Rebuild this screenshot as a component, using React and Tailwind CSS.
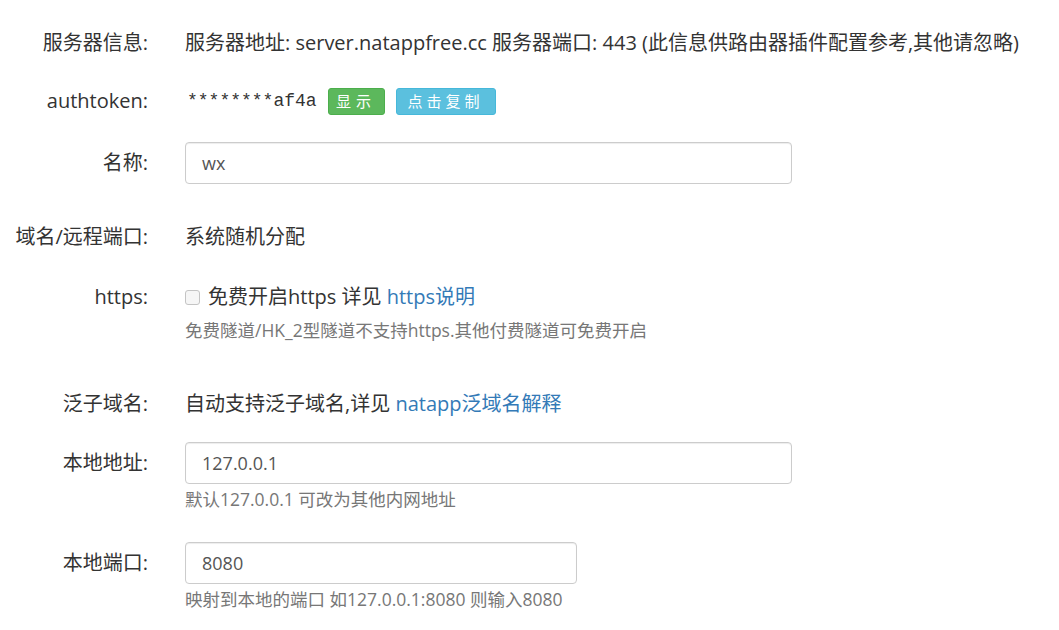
const font = { fontFamily: '"Open Sans", "Noto Sans CJK SC", sans-serif' };

function Row({ label, className = "", children }) {
  return (
    <div className={`flex items-start ${className}`}>
      <div className="w-[148px] shrink-0 text-right text-[20px] leading-[42px] text-[#333]">{label}</div>
      <div className="ml-[37px] flex flex-col">{children}</div>
    </div>
  );
}

function Help({ children, className = "" }) {
  return <div className={`text-[17.5px] leading-[22px] text-[#777] ${className}`}>{children}</div>;
}

function Field({ value, width }) {
  return (
    <div
      className={`${width} h-[42px] rounded-[4px] border border-[#ccc] bg-white px-4 text-[18px] leading-[40px] text-[#555] shadow-[inset_0_1px_1px_rgba(0,0,0,0.075)]`}
    >
      {value}
    </div>
  );
}

export default function App() {
  return (
    <div className="min-h-[630px] w-[1059px] bg-white text-[#333]" style={font}>
      <div className="flex flex-col pt-[22px]">
        <Row label="服务器信息:">
          <div className="whitespace-nowrap text-[20px] leading-[42px]">
            服务器地址: server.natappfree.cc 服务器端口: 443 (此信息供路由器插件配置参考,其他请忽略)
          </div>
        </Row>

        <Row label="authtoken:" className="mt-[16px]">
          <div className="flex h-[42px] items-center">
            <span className="ml-[2px] text-[18px]" style={{ fontFamily: '"Liberation Mono", monospace' }}>
              ********af4a
            </span>
            <span className="ml-[11px] flex h-[27px] w-[57px] items-center justify-center rounded-[3px] border border-[#4cae4c] bg-[#5cb85c] text-[15px] tracking-[5px] text-white">
              显示
            </span>
            <span className="ml-[11px] flex h-[27px] w-[100px] items-center justify-center rounded-[3px] border border-[#46b8da] bg-[#5bc0de] text-[15px] tracking-[4px] text-white">
              点击复制
            </span>
          </div>
        </Row>

        <Row label="名称:" className="mt-[20px]">
          <Field value="wx" width="w-[607px]" />
        </Row>

        <Row label="域名/远程端口:" className="mt-[32px]">
          <div className="text-[20px] leading-[42px]">系统随机分配</div>
        </Row>

        <Row label="https:" className="mt-[18px]">
          <div className="flex h-[42px] items-center text-[20px]">
            <span className="mr-[8px] inline-block h-[15px] w-[15px] rounded-[3px] border border-[#c4c4c4] bg-[#f6f6f6]" />
            免费开启https 详见&nbsp;<span className="text-[#337ab7]">https说明</span>
          </div>
          <Help className="mt-[1px]">免费隧道/HK_2型隧道不支持https.其他付费隧道可免费开启</Help>
        </Row>

        <Row label="泛子域名:" className="mt-[42px]">
          <div className="text-[20px] leading-[42px]">
            自动支持泛子域名,详见 <span className="text-[#337ab7]">natapp泛域名解释</span>
          </div>
        </Row>

        <Row label="本地地址:" className="mt-[17px]">
          <Field value="127.0.0.1" width="w-[607px]" />
          <Help className="mt-[4px]">默认127.0.0.1 可改为其他内网地址</Help>
        </Row>

        <Row label="本地端口:" className="mt-[32px]">
          <Field value="8080" width="w-[392px]" />
          <Help className="mt-[4px]">映射到本地的端口 如127.0.0.1:8080 则输入8080</Help>
        </Row>
      </div>
    </div>
  );
}
